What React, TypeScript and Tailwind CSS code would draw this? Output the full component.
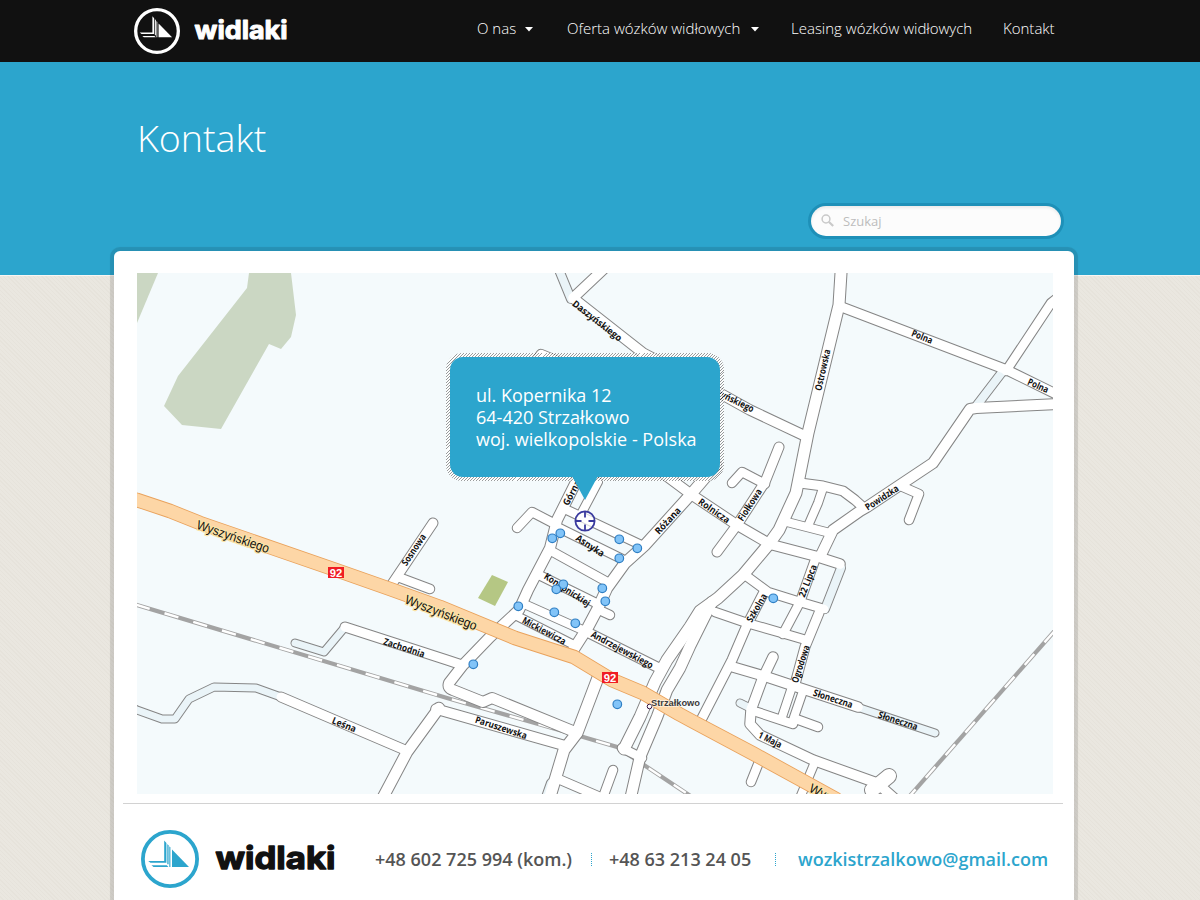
import React from "react";

type Road = { d: string; w?: number; blue?: boolean };

const roads: Road[] = [
  // unpaved stretches
  { d: "M557 265L571 299", w: 9, blue: true },
  { d: "M1003 371L977 405", w: 9, blue: true },
  { d: "M841 568L825 609", w: 9, blue: true },
  { d: "M295 643L324 652L345 627", w: 8, blue: true },
  { d: "M130 707L137 710L162 719L175 719L189 699L214 687L256 688L281 697", w: 8, blue: true },
  { d: "M857 707L935 733", w: 8, blue: true },
  { d: "M740 703L750 708", w: 8, blue: true },
  { d: "M551 783L545 800", w: 9, blue: true },
  // north
  { d: "M841 260L841 273L839 305L808 433L798 483L796 493L779 530L769 544L743 575L718 598L700 611L690 627L667 660L655 682L640 717L624 749", w: 12 },
  { d: "M608 265L573 298L643 353L723 395L750 410L803 435", w: 10.5 },
  { d: "M520 385L541 354L570 366", w: 9.5 },
  { d: "M839 306L1007 370L1060 396", w: 10 },
  { d: "M1060 296L1051 303L1006 371", w: 9.5 },
  { d: "M1060 404L976 408L970 409L933 463L867 507L860 511L833 530L820 557", w: 11 },
  { d: "M903 487L919 494L909 520", w: 9.5 },
  { d: "M800 483L823 486L843 491L855 500L864 508", w: 10 },
  { d: "M823 488L818 503L808 526", w: 9 },
  { d: "M787 522L830 533", w: 9 },
  { d: "M769 544L815 556L840 564", w: 10.5 },
  { d: "M819 613L805 647L795 684", w: 10 },
  { d: "M815 560L800 602L783 634", w: 9.5 },
  { d: "M745 575L768 592L800 602L824 609", w: 9.5 },
  { d: "M764 592L747 625L732 660L699 724", w: 10 },
  { d: "M715 612L747 623L782 633L806 640", w: 9.5 },
  { d: "M712 602L704 618L690 646L680 668L667 690L657 717L640 757L629 805", w: 11.5 },
  { d: "M645 460L692 495L737 525L768 543", w: 10.5 },
  { d: "M716 465L692 493L645 545L625 563L607 588L597 610L588 627L572 652", w: 11.5 },
  { d: "M779 447L765 482L737 525L717 552", w: 10 },
  { d: "M732 483L742 472L765 484", w: 9.5 },
  // western grid
  { d: "M582 470L557 520L550 548L528 590L519 610L490 637L463 665L449 683Q447 688 453 690L483 702L492 698L575 732", w: 11 },
  { d: "M598 482L580 516", w: 9 },
  { d: "M517 528L532 512L555 524", w: 9.5 },
  { d: "M567 510L641 545", w: 9.5 },
  { d: "M555 526L622 559", w: 9.5 },
  { d: "M553 552L609 583", w: 9.5 },
  { d: "M539 575L598 604", w: 9.5 },
  { d: "M522 603L587 632", w: 9 },
  { d: "M515 615L574 645", w: 9 },
  { d: "M597 609L610 615", w: 9.5 },
  { d: "M433 523L392 584", w: 10 },
  { d: "M398 577L430 589", w: 9.5 },
  { d: "M345 627L447 660L462 665", w: 10 },
  { d: "M281 697L405 750", w: 10 },
  { d: "M436 709L566 746", w: 10.5 },
  { d: "M439 708L407 752L380 803", w: 11.5 },
  { d: "M587 632L657 667", w: 10 },
  { d: "M599 675L577 733L564 750L549 800", w: 12 },
  { d: "M556 778L600 797", w: 9.5 },
  { d: "M613 770L602 800", w: 9.5 },
  { d: "M622 748L642 758", w: 9.5 },
  // south-east
  { d: "M733 667L767 677L797 687L858 707", w: 10.5 },
  { d: "M773 657L762 680L751 710L750 724L760 735L813 760L877 783L895 799", w: 10.5 },
  { d: "M757 712L793 724", w: 9.5 },
  { d: "M791 690L782 717", w: 9 },
  { d: "M803 691L792 723", w: 9 },
  { d: "M796 719L818 727", w: 9.5 },
  { d: "M815 762L797 805", w: 9 },
  { d: "M761 757L751 782", w: 9.5 },
  { d: "M872 790L889 776", w: 15 },
];

const mainRoad =
  "M130 498L137 500L170 511L200 523L336 570L390 589L440 607L515 638L574 657L612 680L643 693L679 714L690 720L754 754L836 799";

const dots = [
  [560, 533], [552, 538], [619, 539], [637, 548], [619, 558], [563, 584], [556, 589], [602, 588],
  [605, 601], [518, 606], [554, 612], [575, 623], [473, 664], [617, 704], [773, 598],
];

// text, centre x, centre y, angle, length
const labels: [string, number, number, number, number][] = [
  ["Daszyńskiego", 597, 321, 38, 60],
  ["Daszyńskiego", 729, 398, 26, 54],
  ["Polna", 922, 337, 22, 22],
  ["Polna", 1038, 386, 24, 22],
  ["Ostrowska", 823, 370, -77, 42],
  ["Powidzka", 882, 498, -33, 38],
  ["Górna", 572, 493, -62, 27],
  ["Rolnicza", 714, 511, 35, 36],
  ["Fiołkowa", 750, 505, -57, 36],
  ["Różana", 668, 521, -47, 33],
  ["Asnyka", 590, 546, 33, 32],
  ["Konopnickiej", 567, 590, 33, 53],
  ["Mickiewicza", 544, 631, 28, 48],
  ["Andrzejewskiego", 622, 650, 28, 69],
  ["Sosnowa", 414, 550, -56, 36],
  ["Zachodnia", 404, 648, 18, 43],
  ["Leśna", 344, 725, 22, 25],
  ["Paruszewska", 501, 728, 18, 54],
  ["Szkolna", 757, 608, -60, 31],
  ["22 Lipca", 808, 581, -68, 34],
  ["Ogrodowa", 801, 664, -72, 39],
  ["Słoneczna", 833, 699, 18, 41],
  ["Słoneczna", 898, 721, 18, 41],
  ["1 Maja", 770, 740, 26, 25],
];

function StreetMap() {
  return (
    <svg className="block" width="916" height="521" viewBox="137 273 916 521">
      <rect x="137" y="273" width="916" height="521" fill="#f4fafc" />
      <g fill="#cbd7c3">
        <path d="M137 273H158L137 323Z" />
        <path d="M249 273H291L296 315L291 337L281 349L269 344L221 429L182 425L164 406L178 376L247 288Z" />
      </g>
      <path d="M492 575L508 582L495 606L478 598Z" fill="#b5c784" />
      {["M130 603L137 605L447 698L573 734L617 747L692 797", "M1058 627L908 798"].map((d) => (
        <g key={d} fill="none">
          <path d={d} stroke="#a3a3a3" strokeWidth="4.2" />
          <path d={d} stroke="#fff" strokeWidth="2.4" strokeDasharray="14.5 15.5" strokeDashoffset="-6" />
        </g>
      ))}
      <g fill="none" strokeLinecap="round" strokeLinejoin="round">
        {roads.map((r) => (
          <path key={r.d} d={r.d} stroke="#858585" strokeWidth={(r.w ?? 10) + 1} />
        ))}
        {roads.map((r) => (
          <path key={r.d} d={r.d} stroke={r.blue ? "#eaf4f8" : "#ffffff"} strokeWidth={(r.w ?? 10) - 1} />
        ))}
        <path d={mainRoad} stroke="#e9a25c" strokeWidth="14.5" />
        <path d={mainRoad} stroke="#fdd6a6" strokeWidth="12.8" />
      </g>
      <g fontFamily="Open Sans, sans-serif" fontSize="9.5" fontWeight="700" fill="#111" textAnchor="middle">
        {labels.map(([t, x, y, a, l]) => (
          <text key={t + x} x={x} y={y + 3} transform={`rotate(${a} ${x} ${y})`} textLength={l} lengthAdjust="spacingAndGlyphs">
            {t}
          </text>
        ))}
      </g>
      <g fontFamily="Liberation Sans, sans-serif" fontSize="13" fill="#111" stroke="#fbe3a5" strokeWidth="2.5" paintOrder="stroke" textAnchor="middle">
        <text x="233" y="541" transform="rotate(19 233 537)" textLength="76" lengthAdjust="spacingAndGlyphs">Wyszyńskiego</text>
        <text x="441" y="617" transform="rotate(21 441 613)" textLength="76" lengthAdjust="spacingAndGlyphs">Wyszyńskiego</text>
        <text x="844" y="809" transform="rotate(27 844 805)" textLength="76" lengthAdjust="spacingAndGlyphs">Wyszyńskiego</text>
      </g>
      {[[336, 572.5], [610, 677.5]].map(([x, y]) => (
        <g key={x}>
          <rect x={x - 8} y={y - 5.5} width="16" height="11" fill="#f01d23" />
          <text x={x} y={y + 4} fontFamily="Liberation Sans, sans-serif" fontSize="10.5" fontWeight="700" fill="#fff" textAnchor="middle" textLength="12.5" lengthAdjust="spacingAndGlyphs">92</text>
        </g>
      ))}
      <circle cx="649.5" cy="706.5" r="2.3" fill="#fff" stroke="#32103e" />
      <text x="651" y="705.5" fontFamily="Liberation Sans, sans-serif" fontSize="9" fontWeight="700" fill="#3b3b3b" stroke="#fff" strokeOpacity=".6" strokeWidth="1.5" paintOrder="stroke" textLength="49" lengthAdjust="spacingAndGlyphs">Strzałkowo</text>
      {dots.map(([x, y]) => (
        <circle key={`${x}-${y}`} cx={x + 0.3} cy={y + 0.3} r="4.3" fill="#82c4f8" stroke="#2f7fc4" strokeWidth="1.2" />
      ))}
      <g fill="none" stroke="#3a3a9e" strokeWidth="1.8">
        <circle cx="585" cy="521" r="9.6" fill="#fff" fillOpacity=".7" />
        <path d="M585 512V517.5M585 524.5V530M576 521H581.5M588.5 521H594" />
      </g>
    </svg>
  );
}

function Logo({ size, color, stroke }: { size: number; color: string; stroke: number }) {
  return (
    <svg className="block shrink-0" width={size} height={size} viewBox="0 0 58 58">
      <circle cx="29" cy="29" r={29 - stroke / 2} fill="none" stroke={color} strokeWidth={stroke} />
      <g fill={color}>
        <path d="M31 19.5L48 37H31Z" />
        <path d="M23.2 10.5L25.4 13V32.8H9.5L7.2 31H23.2Z" />
        <path d="M26.3 14L27.6 15.5V34.3H26.3Z" />
        <path d="M28.3 16.3L29.4 17.5V37H28.3Z" />
        <path d="M10.5 35.2H25.8L27.4 37H12.5Z" />
      </g>
    </svg>
  );
}

function Caret() {
  return (
    <svg className="mt-[2px] block" width="8" height="5" viewBox="0 0 8 5">
      <path d="M0 0H8L4 4.6Z" fill="#fff" />
    </svg>
  );
}

function DottedDivider() {
  return (
    <span className="mt-[23px] h-[14px] w-px bg-[repeating-linear-gradient(#2ca5cd_0_1px,transparent_1px_2px)]" />
  );
}

export default function App() {
  return (
    <div className="h-[900px] w-full overflow-hidden bg-[#eae7e0] bg-[repeating-linear-gradient(45deg,transparent_0_2px,rgba(120,100,70,0.03)_2px_3px)] font-['Open_Sans',sans-serif]">
      <header className="h-[62px] bg-[#111]">
        <div className="flex h-full items-start pl-[134px]">
          <div className="flex w-[343px] items-start gap-[14px] pt-2">
            <Logo size={46} color="#ffffff" stroke={4.2} />
            <svg className="block" width="96" height="40" viewBox="0 0 96 40">
              <text x="0.5" y="31" fontFamily="Inter, sans-serif" fontSize="25" fontWeight="700" fill="#fff" stroke="#fff" strokeWidth="1" strokeLinejoin="round" textLength="93" lengthAdjust="spacingAndGlyphs">widlaki</text>
            </svg>
          </div>
          <nav className="flex pt-[17px] text-[15px] leading-[22px] font-light whitespace-nowrap text-white">
            <a className="flex w-[90px] items-center gap-[9px]">O nas <Caret /></a>
            <a className="flex w-[224px] items-center gap-[11px]">Oferta wózków widłowych <Caret /></a>
            <a className="w-[212px]">Leasing wózków widłowych</a>
            <a>Kontakt</a>
          </nav>
        </div>
      </header>

      <section className="flex h-[213px] flex-col bg-[#2ca5cd] pt-[51px] pl-[137px] shadow-[0_1px_0_#f8f6f3]">
        <h1 className="h-[93px] text-[37.6px] leading-[50px] font-light text-white">Kontakt</h1>
        <div className="ml-[674px] flex h-[30px] w-[250px] items-center gap-[8px] rounded-full bg-[#fcfcfc] pl-[10px] shadow-[0_0_0_3px_#1e90b8,inset_0_2px_3px_rgba(0,0,0,0.07)]">
          <svg className="block" width="14" height="14" viewBox="0 0 14 14" fill="none" stroke="#c9c9c9">
            <circle cx="5" cy="5" r="3.9" strokeWidth="1.5" />
            <path d="M8 8L12.2 12" strokeWidth="2.2" />
          </svg>
          <span className="pt-[2px] text-[13px] text-[#bdbdbd]">Szukaj</span>
        </div>
      </section>

      <main className="relative ml-[114px] -mt-[24px] h-[700px] w-[960px] rounded-t-[6px] bg-white pt-[22px] shadow-[0_0_0_4px_rgba(0,0,0,0.09),0_0_2px_4px_rgba(0,0,0,0.03)]">
        <div className="relative ml-[23px] h-[521px] w-[916px]">
          <StreetMap />
          <div className="absolute top-[80px] left-[309px] h-[128px] w-[278px] rounded-[16px] bg-[repeating-linear-gradient(135deg,rgba(60,60,60,0.5)_0_0.7px,rgba(255,255,255,0.75)_0.7px_2.1px)] p-1">
            <div className="h-full rounded-[13px] bg-[#2ca5cd] pt-[27px] pl-[26px] text-[18px] leading-[22px] whitespace-nowrap text-white">
              <p>ul. Kopernika 12</p>
              <p>64-420 Strzałkowo</p>
              <p>woj. wielkopolskie - Polska</p>
            </div>
          </div>
          <svg className="absolute top-[203px] left-[433px]" width="30" height="25" viewBox="0 0 30 25">
            <path d="M2 0H28L15 24Z" fill="#2ca5cd" />
          </svg>
        </div>
        <div className="mt-[9px] ml-[9px] h-px w-[940px] bg-[#d2d2d2]" />
        <div className="flex h-[90px] items-start pt-[26px] pl-[27px] text-[18px] leading-[26px] font-semibold whitespace-nowrap text-[#555]">
          <Logo size={58} color="#2ca5cd" stroke={3.8} />
          <svg className="ml-[16px] block" width="124" height="50" viewBox="0 0 124 50">
            <text x="0.5" y="38.5" fontFamily="Inter, sans-serif" fontSize="31.5" fontWeight="700" fill="#111" stroke="#111" strokeWidth="1.3" strokeLinejoin="round" textLength="120" lengthAdjust="spacingAndGlyphs">widlaki</text>
          </svg>
          <span className="mt-[16px] ml-[36px] w-[216px]">+48 602 725 994 (kom.)</span>
          <DottedDivider />
          <span className="mt-[16px] ml-[17px] w-[166px]">+48 63 213 24 05</span>
          <DottedDivider />
          <span className="mt-[16px] ml-[22px] text-[#2ca5cd]">wozkistrzalkowo@gmail.com</span>
        </div>
      </main>
    </div>
  );
}
